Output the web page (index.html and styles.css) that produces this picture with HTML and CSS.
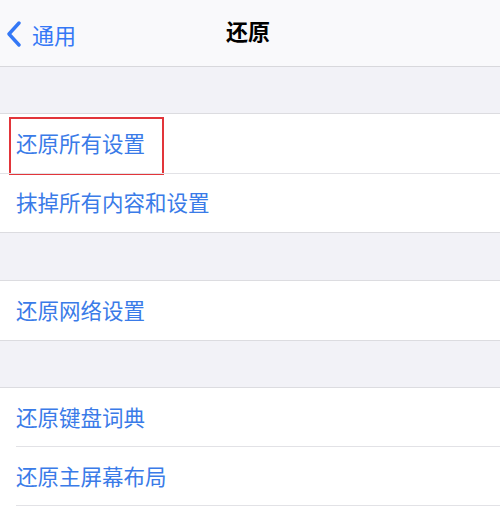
FILE: index.html
```html
<!DOCTYPE html>
<html lang="zh-CN">
  <head>
    <title>还原</title>
    <meta charset="UTF-8" />
    <meta name="viewport" content="width=device-width, initial-scale=1.0" />
    <link rel="stylesheet" href="styles.css">
  </head>
  <body>
    <header class="nav-bar">
      <a class="back-link" href="#">
        <svg class="back-icon" width="16" height="26" viewBox="0 0 16 26">
          <polyline points="13,2 3,13 13,24" fill="none" stroke="#3478f6" stroke-width="3.4" stroke-linecap="round" stroke-linejoin="round" />
        </svg>
        <span>通用</span>
      </a>
      <h1 class="nav-title">还原</h1>
    </header>

    <div class="group-gap"></div>
    <ul class="group">
      <li class="row row-highlight">还原所有设置</li>
      <li class="row">抹掉所有内容和设置</li>
    </ul>

    <div class="group-gap group-gap-wide"></div>
    <ul class="group">
      <li class="row">还原网络设置</li>
    </ul>

    <div class="group-gap"></div>
    <ul class="group">
      <li class="row row-inset">还原键盘词典</li>
      <li class="row row-inset">还原主屏幕布局</li>
      <li class="row row-inset"></li>
    </ul>
  </body>
</html>
```

FILE: styles.css
```css
* {
  margin: 0;
  padding: 0;
  box-sizing: border-box;
}

body {
  font-family: "Noto Sans CJK SC", "Noto Sans", sans-serif;
  background: #f2f2f7;
  width: 500px;
  height: 519px;
  overflow: hidden;
}

.nav-bar {
  height: 67px;
  background: #f9f9fb;
  border-bottom: 1px solid #d8d8dc;
  display: flex;
  align-items: center;
  justify-content: center;
  position: relative;
  padding-bottom: 6px;
}

.back-link {
  position: absolute;
  left: 6px;
  top: 18px;
  display: flex;
  align-items: center;
  gap: 10px;
  color: #3478f6;
  text-decoration: none;
  font-size: 22px;
}

.nav-title {
  font-size: 22px;
  font-weight: 700;
  color: #000;
  margin-left: -4px;
}

.group-gap {
  height: 46px;
}

.group-gap-wide {
  height: 47px;
}

.group {
  list-style: none;
  background: #fff;
  border-top: 1px solid #dcdce0;
  border-bottom: 1px solid #dcdce0;
}

.row {
  height: 59px;
  display: flex;
  align-items: center;
  padding-left: 16px;
  padding-bottom: 3px;
  font-size: 21.5px;
  color: #3a7be8;
  position: relative;
}

.row + .row {
  border-top: 1px solid #e2e2e6;
}

.row-inset + .row-inset {
  border-top: none;
}

.row-inset + .row-inset::before {
  content: '';
  position: absolute;
  top: -1px;
  left: 16px;
  right: 0;
  height: 1px;
  background: #e2e2e6;
}

/* Red callout box around the first option */
.row-highlight::after {
  content: '';
  position: absolute;
  left: 9px;
  top: 3px;
  width: 151px;
  height: 54px;
  border: 2px solid #e2353a;
}
```
